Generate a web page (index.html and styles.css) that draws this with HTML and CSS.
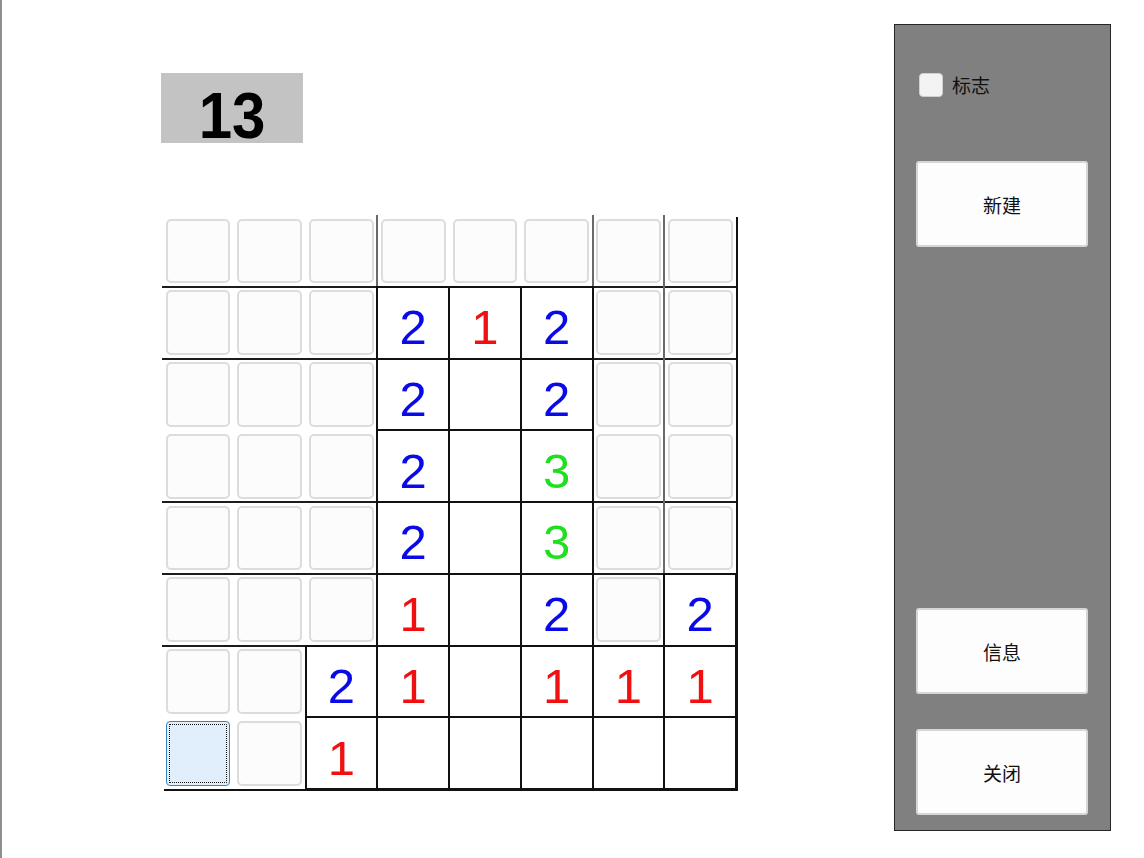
FILE: index.html
```html
<!DOCTYPE html>
<html lang="zh">
<head>
<meta charset="utf-8">
<title>扫雷</title>
<link rel="stylesheet" href="styles.css">
</head>
<body>
<div class="app">
  <main class="game">
    <div class="counter"><span>13</span></div>
    <div class="board">
      <div class="row">
        <div class="cell"><span class="btn"></span></div>
        <div class="cell"><span class="btn"></span></div>
        <div class="cell"><span class="btn"></span></div>
        <div class="cell gl"><span class="btn"></span></div>
        <div class="cell"><span class="btn"></span></div>
        <div class="cell"><span class="btn"></span></div>
        <div class="cell gl"><span class="btn"></span></div>
        <div class="cell gl"><span class="btn"></span></div>
      </div>
      <div class="row ruled">
        <div class="cell"><span class="btn"></span></div>
        <div class="cell"><span class="btn"></span></div>
        <div class="cell"><span class="btn"></span></div>
        <div class="cell open n2">2</div>
        <div class="cell open n1">1</div>
        <div class="cell open n2">2</div>
        <div class="cell"><span class="btn"></span></div>
        <div class="cell gl"><span class="btn"></span></div>
      </div>
      <div class="row ruled">
        <div class="cell"><span class="btn"></span></div>
        <div class="cell"><span class="btn"></span></div>
        <div class="cell"><span class="btn"></span></div>
        <div class="cell open n2">2</div>
        <div class="cell open"></div>
        <div class="cell open n2">2</div>
        <div class="cell"><span class="btn"></span></div>
        <div class="cell gl"><span class="btn"></span></div>
      </div>
      <div class="row">
        <div class="cell"><span class="btn"></span></div>
        <div class="cell"><span class="btn"></span></div>
        <div class="cell"><span class="btn"></span></div>
        <div class="cell open n2">2</div>
        <div class="cell open"></div>
        <div class="cell open n3">3</div>
        <div class="cell"><span class="btn"></span></div>
        <div class="cell gl"><span class="btn"></span></div>
      </div>
      <div class="row ruled">
        <div class="cell"><span class="btn"></span></div>
        <div class="cell"><span class="btn"></span></div>
        <div class="cell"><span class="btn"></span></div>
        <div class="cell open n2">2</div>
        <div class="cell open"></div>
        <div class="cell open n3">3</div>
        <div class="cell"><span class="btn"></span></div>
        <div class="cell gl"><span class="btn"></span></div>
      </div>
      <div class="row ruled">
        <div class="cell"><span class="btn"></span></div>
        <div class="cell"><span class="btn"></span></div>
        <div class="cell"><span class="btn"></span></div>
        <div class="cell open n1">1</div>
        <div class="cell open"></div>
        <div class="cell open n2">2</div>
        <div class="cell"><span class="btn"></span></div>
        <div class="cell open n2">2</div>
      </div>
      <div class="row ruled">
        <div class="cell"><span class="btn"></span></div>
        <div class="cell"><span class="btn"></span></div>
        <div class="cell open n2">2</div>
        <div class="cell open n1">1</div>
        <div class="cell open"></div>
        <div class="cell open n1">1</div>
        <div class="cell open n1">1</div>
        <div class="cell open n1">1</div>
      </div>
      <div class="row">
        <div class="cell"><span class="btn sel"></span></div>
        <div class="cell"><span class="btn"></span></div>
        <div class="cell open n1">1</div>
        <div class="cell open"></div>
        <div class="cell open"></div>
        <div class="cell open"></div>
        <div class="cell open"></div>
        <div class="cell open"></div>
      </div>
    </div>
  </main>
  <aside class="panel">
    <label class="flag"><span class="box"></span><span>标志</span></label>
    <button class="pbtn first">新建</button>
    <div class="spacer"></div>
    <button class="pbtn">信息</button>
    <button class="pbtn last">关闭</button>
  </aside>
</div>
</body>
</html>
```

FILE: styles.css
```css
html, body {
  margin: 0;
  padding: 0;
  background: #ffffff;
}

body {
  font-family: "Liberation Sans", Arial, "Noto Sans CJK SC", sans-serif;
}

.app {
  display: flex;
  height: 858px;
  box-sizing: border-box;
  border-left: 2px solid #8e8e8e;
}

.game {
  padding: 73px 0 0 159px;
}

.counter {
  width: 142px;
  height: 70px;
  box-sizing: border-box;
  padding-top: 15px;
  background: #c3c3c3;
  display: flex;
  justify-content: center;
  align-items: center;
  font-weight: bold;
  font-size: 60px;
  color: #000;
}

.counter span {
  display: inline-block;
  line-height: 1;
  transform: scaleY(1.09);
}

.board {
  margin: 72px 0 0 1px;
  width: 574px;
  box-shadow: 2px 2px 0 #111;
}

.row {
  display: grid;
  grid-template-columns: repeat(8, 1fr);
  height: 71.75px;
}

.row.ruled {
  box-shadow: 0 -1px 0 #1c1c1c, inset 0 1px 0 #1c1c1c;
}

.cell {
  display: flex;
  align-items: center;
  justify-content: center;
  min-width: 0;
}

.cell.gl {
  box-shadow: -1px 0 0 #6a6a6a, inset 1px 0 0 #6a6a6a;
}

.cell.open {
  background: #fff;
  box-shadow: 0 0 0 1px #111, inset 0 0 0 1px #111;
  box-sizing: border-box;
  padding-top: 10px;
  font-size: 49px;
  line-height: 1;
}

.n1 { color: #f01010; }
.n2 { color: #0a0ae8; }
.n3 { color: #1ee01e; }

.btn {
  flex: 1;
  align-self: stretch;
  margin: 3.5px;
  border: 2px solid #dcdcdc;
  border-radius: 5px;
  background: #fcfcfc;
}

.btn.sel {
  border: 1px solid #3a83c2;
  border-radius: 4px;
  background: #e1eefb;
  outline: 1px dotted #111;
  outline-offset: -4px;
}

.panel {
  margin: 24px 33px 0 auto;
  width: 217px;
  height: 807px;
  box-sizing: border-box;
  background: #808080;
  border: 1px solid #262626;
  display: flex;
  flex-direction: column;
  padding: 47px 22px 15px 21px;
}

.flag {
  display: flex;
  align-items: center;
  gap: 9px;
  height: 25px;
  padding-left: 3px;
  font-family: "Noto Sans CJK SC", sans-serif;
  font-size: 19px;
  color: #111;
}

.box {
  width: 24px;
  height: 24px;
  box-sizing: border-box;
  border-radius: 4px;
  background: #f3f3f3;
  border: 1px solid #d0d0d0;
}

.pbtn {
  height: 86px;
  width: 100%;
  box-sizing: border-box;
  background: #fdfdfd;
  border: 2px solid #d6d6d6;
  border-radius: 3px;
  font-family: "Noto Sans CJK SC", sans-serif;
  font-size: 19px;
  color: #111;
  padding: 0;
}

.pbtn.first {
  margin-top: 64px;
}

.pbtn.last {
  margin-top: 35px;
}

.spacer {
  flex: 1;
}
```
